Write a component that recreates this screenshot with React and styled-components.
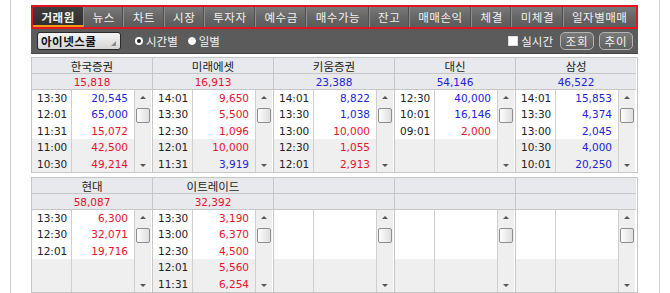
import React from 'react';
import styled, { createGlobalStyle } from 'styled-components';

const GlobalStyle = createGlobalStyle`
  html, body {
    margin: 0;
    padding: 0;
    background: #fff;
  }
  body {
    font-family: "Noto Sans CJK KR", "DejaVu Sans", sans-serif;
  }
`;

const Page = styled.div`
  margin-left: 10px;
  width: 650px;
  height: 293px;
  border-left: 1px solid #cfcfcf;
  border-right: 1px solid #cfcfcf;
  box-sizing: border-box;
  padding: 5px 0 0 20px;
`;

const Frame = styled.div`
  width: 607px;
`;

const TabBar = styled.div`
  display: flex;
  height: 24px;
  box-sizing: border-box;
  border: 2px solid #e4141e;
  background: linear-gradient(#7a7a7a, #666 50%, #5c5c5c);
`;

const Tab = styled.div`
  flex: 1 1 auto;
  display: flex;
  align-items: center;
  justify-content: center;
  padding: 0 4px;
  font-size: 11.5px;
  letter-spacing: 0.5px;
  color: #f2f2f2;
  font-weight: ${p => (p.active ? 700 : 400)};
  background: ${p => (p.active ? 'linear-gradient(#3e3e3e, #2e2e2e)' : 'transparent')};
  border-right: 1px solid #8d8d8d;
  box-shadow: ${p => (p.active ? 'inset 0 -2px 0 #f39a12' : 'inset -1px 0 0 #505050')};
  white-space: nowrap;

  &:last-child {
    border-right: none;
    box-shadow: none;
  }
`;

const Toolbar = styled.div`
  height: 24px;
  background: #5b5b5b;
  border-bottom: 1px solid #454545;
  display: flex;
  align-items: center;
  padding: 0 5px 0 6px;
  gap: 10px;
  color: #f4f4f4;
  font-size: 11.5px;
`;

const SelectBox = styled.div`
  position: relative;
  width: 84px;
  height: 18px;
  box-sizing: border-box;
  border: 1px solid #2a2a2a;
  border-radius: 3px;
  background: linear-gradient(#f4f4f4, #d6d6d6);
  color: #111;
  font-weight: 700;
  font-size: 11.5px;
  line-height: 16px;
  padding-left: 3px;
  letter-spacing: 0.5px;
`;

const Grip = styled.span`
  position: absolute;
  right: 4px;
  bottom: 3px;
  width: 0;
  height: 0;
  border-left: 5px solid transparent;
  border-bottom: 5px solid #8a8a8a;
`;

const RadioLabel = styled.label`
  display: flex;
  align-items: center;
  gap: 3px;
  margin-left: ${p => p.$first ? '4px' : '0'};
`;

const RadioDot = styled.span`
  width: 8px;
  height: 8px;
  border-radius: 50%;
  box-sizing: border-box;
  background: ${p => (p.checked ? '#222' : '#fff')};
  border: ${p => (p.checked ? '2px solid #fff' : '1px solid #fff')};
`;

const Spacer = styled.div`
  flex: 1;
`;

const CheckLabel = styled.label`
  display: flex;
  align-items: center;
  gap: 3px;
  margin-right: 2px;
`;

const CheckBox = styled.span`
  width: 8px;
  height: 8px;
  background: #fff;
  border: 1px solid #ddd;
`;

const ToolButton = styled.div`
  width: 34px;
  height: 18px;
  box-sizing: border-box;
  border: 1px solid #b4b4b4;
  border-radius: 5px;
  background: linear-gradient(#7a7a7a, #606060);
  color: #f4f4f4;
  font-size: 11.5px;
  display: flex;
  align-items: center;
  justify-content: center;
  letter-spacing: 1px;
  margin-left: -5px;
`;

const Board = styled.div`
  margin-top: 3px;
  display: flex;
  flex-direction: column;
  gap: 4px;
`;

const Block = styled.div`
  display: grid;
  grid-template-columns: repeat(5, 121px);
  border: 1px solid #c6c6c6;
  border-left: none;
  background: #fff;
`;

const Panel = styled.div`
  border-left: 1px solid #c6c6c6;
  display: flex;
  flex-direction: column;
`;

const HeadCell = styled.div`
  height: 15px;
  background: #e8e9ed;
  border-bottom: 1px solid #c6c6c6;
  display: flex;
  align-items: center;
  justify-content: center;
  font-size: 11.5px;
  color: ${p => p.color || '#222'};
  font-family: ${p => (p.num ? '"DejaVu Sans", sans-serif' : 'inherit')};
  ${p => p.num && 'font-size: 10.5px;'}
`;

const DataArea = styled.div`
  height: 82px;
  display: grid;
  grid-template-columns: 40px 63px 16px;
  gap: 0;
`;

const Col = styled.div`
  background: linear-gradient(#fff 0 49px, #efefef 49px);
  border-right: 1px solid #cfcfcf;
  display: flex;
  flex-direction: column;
  font-family: "DejaVu Sans", sans-serif;
  font-size: 10.5px;
`;

const Cell = styled.div`
  height: 16.4px;
  line-height: 16.4px;
  padding: ${p => (p.right ? '0 6px 0 0' : '0 0 0 5px')};
  text-align: ${p => (p.right ? 'right' : 'left')};
  color: ${p => p.color || '#222'};
`;

const ScrollTrack = styled.div`
  position: relative;
  background: #efefef;
`;

const Arrow = styled.span`
  position: absolute;
  left: 5px;
  width: 0;
  height: 0;
  border-left: 3px solid transparent;
  border-right: 3px solid transparent;
  ${p => (p.down ? 'bottom: 5px; border-top: 3px solid #555;' : 'top: 6px; border-bottom: 3px solid #555;')}
`;

const Thumb = styled.span`
  position: absolute;
  left: 1px;
  top: 18px;
  width: 14px;
  height: 15px;
  box-sizing: border-box;
  border: 1px solid #8e8e8e;
  border-radius: 2px;
  background: linear-gradient(90deg, #fdfdfd, #dedede);
`;

const RED = '#e3142c';
const BLUE = '#2323d8';

const blocks = [
  [
    { name: '한국증권', total: '15,818', tc: RED, rows: [['13:30', '20,545', BLUE], ['12:01', '65,000', BLUE], ['11:31', '15,072', RED], ['11:00', '42,500', RED], ['10:30', '49,214', RED]] },
    { name: '미래에셋', total: '16,913', tc: RED, rows: [['14:01', '9,650', RED], ['13:30', '5,500', RED], ['12:30', '1,096', RED], ['12:01', '10,000', RED], ['11:31', '3,919', BLUE]] },
    { name: '키움증권', total: '23,388', tc: BLUE, rows: [['14:01', '8,822', BLUE], ['13:30', '1,038', BLUE], ['13:00', '10,000', RED], ['12:30', '1,055', RED], ['12:01', '2,913', RED]] },
    { name: '대신', total: '54,146', tc: BLUE, rows: [['12:30', '40,000', BLUE], ['10:01', '16,146', BLUE], ['09:01', '2,000', RED]] },
    { name: '삼성', total: '46,522', tc: BLUE, rows: [['14:01', '15,853', BLUE], ['13:30', '4,374', BLUE], ['13:00', '2,045', BLUE], ['10:30', '4,000', BLUE], ['10:01', '20,250', BLUE]] },
  ],
  [
    { name: '현대', total: '58,087', tc: RED, rows: [['13:30', '6,300', RED], ['12:30', '32,071', RED], ['12:01', '19,716', RED]] },
    { name: '이트레이드', total: '32,392', tc: RED, rows: [['13:30', '3,190', RED], ['13:00', '6,370', RED], ['12:30', '4,500', RED], ['12:01', '5,560', RED], ['11:31', '6,254', RED]] },
    { name: '', total: '', rows: [] },
    { name: '', total: '', rows: [] },
    { name: '', total: '', rows: [] },
  ],
];

const tabs = ['거래원', '뉴스', '차트', '시장', '투자자', '예수금', '매수가능', '잔고', '매매손익', '체결', '미체결', '일자별매매'];

function BrokerPanel({ data }) {
  return (
    <Panel>
      <HeadCell>{data.name}</HeadCell>
      <HeadCell num color={data.tc}>{data.total}</HeadCell>
      <DataArea>
        <Col>
          {data.rows.map((r, i) => <Cell key={i}>{r[0]}</Cell>)}
        </Col>
        <Col>
          {data.rows.map((r, i) => <Cell key={i} right color={r[2]}>{r[1]}</Cell>)}
        </Col>
        <ScrollTrack>
          <Arrow />
          <Thumb />
          <Arrow down />
        </ScrollTrack>
      </DataArea>
    </Panel>
  );
}

export default function App() {
  return (
    <>
      <GlobalStyle />
      <Page>
        <Frame>
          <TabBar>
            {tabs.map((t, i) => <Tab key={t} active={i === 0}>{t}</Tab>)}
          </TabBar>
          <Toolbar>
            <SelectBox>아이넷스쿨<Grip /></SelectBox>
            <RadioLabel $first><RadioDot checked />시간별</RadioLabel>
            <RadioLabel><RadioDot />일별</RadioLabel>
            <Spacer />
            <CheckLabel><CheckBox />실시간</CheckLabel>
            <ToolButton>조회</ToolButton>
            <ToolButton>추이</ToolButton>
          </Toolbar>
          <Board>
            {blocks.map((b, bi) => (
              <Block key={bi}>
                {b.map((p, pi) => <BrokerPanel key={pi} data={p} />)}
              </Block>
            ))}
          </Board>
        </Frame>
      </Page>
    </>
  );
}
